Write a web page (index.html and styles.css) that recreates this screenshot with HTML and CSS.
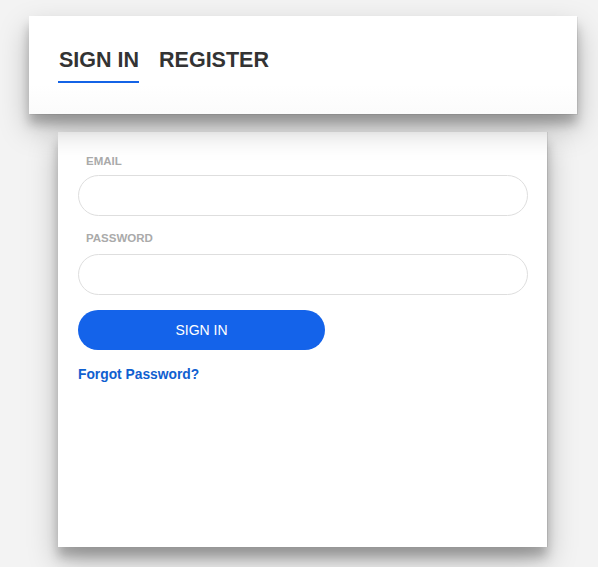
FILE: index.html
```html
<!DOCTYPE html>
<html>
<head>
<meta charset="utf-8">
<link rel="stylesheet" href="styles.css">
</head>
<body>
<div class="page">
  <header class="tabs-card">
    <nav class="tabs">
      <a class="tab active">SIGN IN</a>
      <a class="tab">REGISTER</a>
    </nav>
  </header>
  <main class="form-card">
    <form class="form">
      <label class="label">EMAIL</label>
      <input class="input" type="email">
      <label class="label label-2">PASSWORD</label>
      <input class="input" type="password">
      <button class="btn" type="button">SIGN IN</button>
      <a class="forgot">Forgot Password?</a>
    </form>
  </main>
</div>
</body>
</html>
```

FILE: styles.css
```css
* { box-sizing: border-box; }
html, body { margin: 0; padding: 0; }
body {
  background: #f3f3f3;
  font-family: "Liberation Sans", Arial, sans-serif;
  width: 598px;
  height: 567px;
  overflow: hidden;
}
.page {
  padding-top: 16px;
  display: flex;
  flex-direction: column;
}
.tabs-card {
  margin-left: 29px;
  width: 548px;
  height: 98px;
  background: linear-gradient(#ffffff 70%, #fbfbfb);
  box-shadow: 0 14px 28px rgba(0,0,0,0.25), 0 10px 10px rgba(0,0,0,0.22), 1px 1px 0 rgba(0,0,0,0.06);
  padding: 32px 0 0 30px;
  position: relative;
  z-index: 2;
}
.tabs {
  display: flex;
  gap: 20px;
}
.tab {
  font-size: 21.5px;
  line-height: 25px;
  font-weight: bold;
  color: #333;
  padding-bottom: 8px;
  border-bottom: 2px solid transparent;
}
.tab.active {
  border-bottom-color: #1463e6;
  margin-left: -1px;
  padding-left: 1px;
}
.form-card {
  margin-top: 18px;
  margin-left: 58px;
  width: 489px;
  height: 415px;
  background: #fff;
  box-shadow: 0 14px 28px rgba(0,0,0,0.25), 0 10px 10px rgba(0,0,0,0.22), 1px 0 0 rgba(0,0,0,0.08);
  padding: 23px 19px 0 20px;
}
.form {
  display: flex;
  flex-direction: column;
  align-items: flex-start;
}
.label {
  display: block;
  font-size: 11.5px;
  line-height: 13px;
  font-weight: bold;
  color: #aaaaaa;
  padding-left: 8px;
  margin-bottom: 7px;
}
.label-2 { margin-top: 16px; margin-bottom: 9px; }
.input {
  width: 450px;
  height: 41px;
  border: 1px solid #dedede;
  border-radius: 21px;
  background: #fff;
  outline: none;
  margin: 0;
}
.btn {
  margin-top: 15px;
  width: 247px;
  height: 40px;
  border: none;
  border-radius: 20px;
  background: #1463ea;
  color: #fff;
  font-family: "Liberation Sans", Arial, sans-serif;
  font-size: 14px;
  padding: 0;
}
.forgot {
  margin-top: 17px;
  font-size: 13.8px;
  line-height: 15px;
  font-weight: bold;
  color: #1060d0;
}
```
